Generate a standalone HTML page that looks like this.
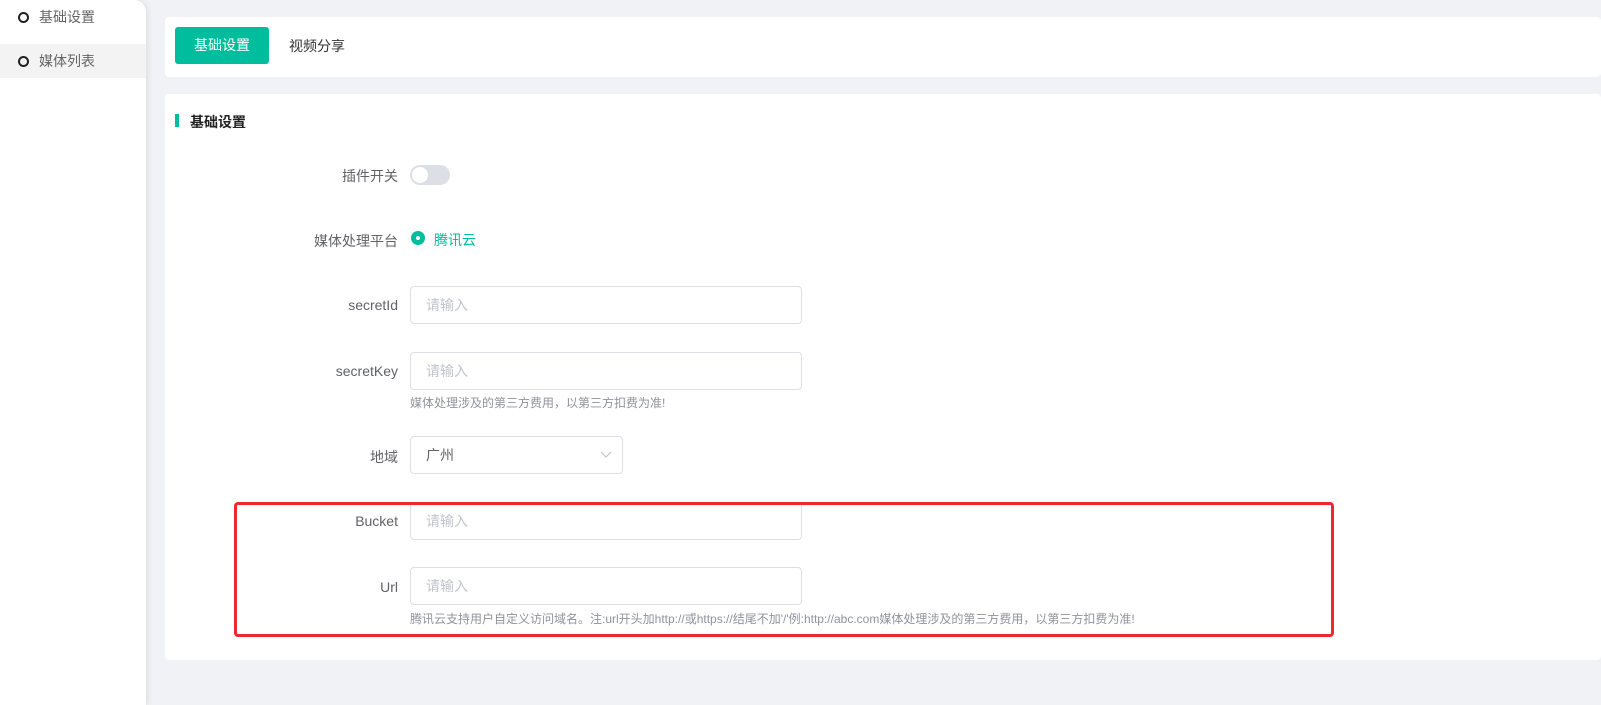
<!DOCTYPE html>
<html><head><meta charset="utf-8"><style>
*{box-sizing:border-box;margin:0;padding:0}
body{width:1601px;height:705px;background:#f0f2f5;font-family:"Liberation Sans","Noto Sans CJK SC",sans-serif;font-size:14px;color:#606266;position:relative;overflow:hidden}
.side{position:absolute;left:0;top:0;width:146px;height:705px;background:#fff;border-top-right-radius:12px;box-shadow:2px 0 6px rgba(0,0,0,.08)}
.mi{position:absolute;left:0;width:146px;height:34px;line-height:34px;padding-left:39px;color:#666}
.mi i{position:absolute;left:18px;top:12px;width:11px;height:11px;border:2px solid #222;border-radius:50%}
.card{position:absolute;background:#fff;border-radius:4px}
.abs{position:absolute}
.lbl{position:absolute;right:1203px;text-align:right;color:#606266}
.inp{position:absolute;left:410px;width:392px;height:38px;border:1px solid #dcdfe6;border-radius:4px;padding-left:15px;line-height:36px;color:#c0c4cc}
.hint{position:absolute;left:410px;font-size:12px;color:#909399}
</style></head><body>
<div class="side">
<div class="mi" style="top:0">基础设置<i></i></div>
<div class="mi" style="top:44px;background:#f3f3f3">媒体列表<i></i></div>
</div>
<div class="card" style="left:165px;top:17px;width:1436px;height:60px"></div>
<div class="abs" style="left:175px;top:27px;width:94px;height:37px;background:#00bd9d;border-radius:3px;color:#fff;text-align:center;line-height:37px">基础设置</div>
<div class="abs" style="left:289px;top:36px;color:#333">视频分享</div>
<div class="card" style="left:165px;top:94px;width:1436px;height:566px"></div>
<div class="abs" style="left:175px;top:114px;width:4px;height:13px;background:#00bd9d"></div>
<div class="abs" style="left:190px;top:112px;color:#222;font-weight:bold">基础设置</div>
<div class="lbl" style="top:166px">插件开关</div>
<div class="abs" style="left:410px;top:165px;width:40px;height:20px;background:#dcdfe6;border-radius:10px"><div style="position:absolute;left:2px;top:2px;width:16px;height:16px;background:#fff;border-radius:50%"></div></div>
<div class="lbl" style="top:231px">媒体处理平台</div>
<div class="abs" style="left:411px;top:231px;width:14px;height:14px;background:#00bd9d;border-radius:50%"><div style="position:absolute;left:5px;top:5px;width:4px;height:4px;background:#fff;border-radius:50%"></div></div>
<div class="abs" style="left:434px;top:230px;color:#00bd9d">腾讯云</div>
<div class="lbl" style="top:297px">secretId</div>
<div class="inp" style="top:286px">请输入</div>
<div class="lbl" style="top:363px">secretKey</div>
<div class="inp" style="top:352px">请输入</div>
<div class="hint" style="top:394px">媒体处理涉及的第三方费用，以第三方扣费为准!</div>
<div class="lbl" style="top:447px">地域</div>
<div class="inp" style="top:436px;width:213px;color:#606266">广州<svg style="position:absolute;right:10px;top:14px" width="12" height="8" viewBox="0 0 12 8"><path d="M1 1l5 5 5-5" fill="none" stroke="#c0c4cc" stroke-width="1.2"/></svg></div>
<div class="lbl" style="top:513px">Bucket</div>
<div class="inp" style="top:502px">请输入</div>
<div class="lbl" style="top:579px">Url</div>
<div class="inp" style="top:567px">请输入</div>
<div class="hint" style="top:610px">腾讯云支持用户自定义访问域名。注:url开头加http://或https://结尾不加'/'例:http://abc.com媒体处理涉及的第三方费用，以第三方扣费为准!</div>
<div class="abs" style="left:234px;top:502px;width:1100px;height:135px;border:3px solid #f0282d;border-radius:4px"></div>
</body></html>
